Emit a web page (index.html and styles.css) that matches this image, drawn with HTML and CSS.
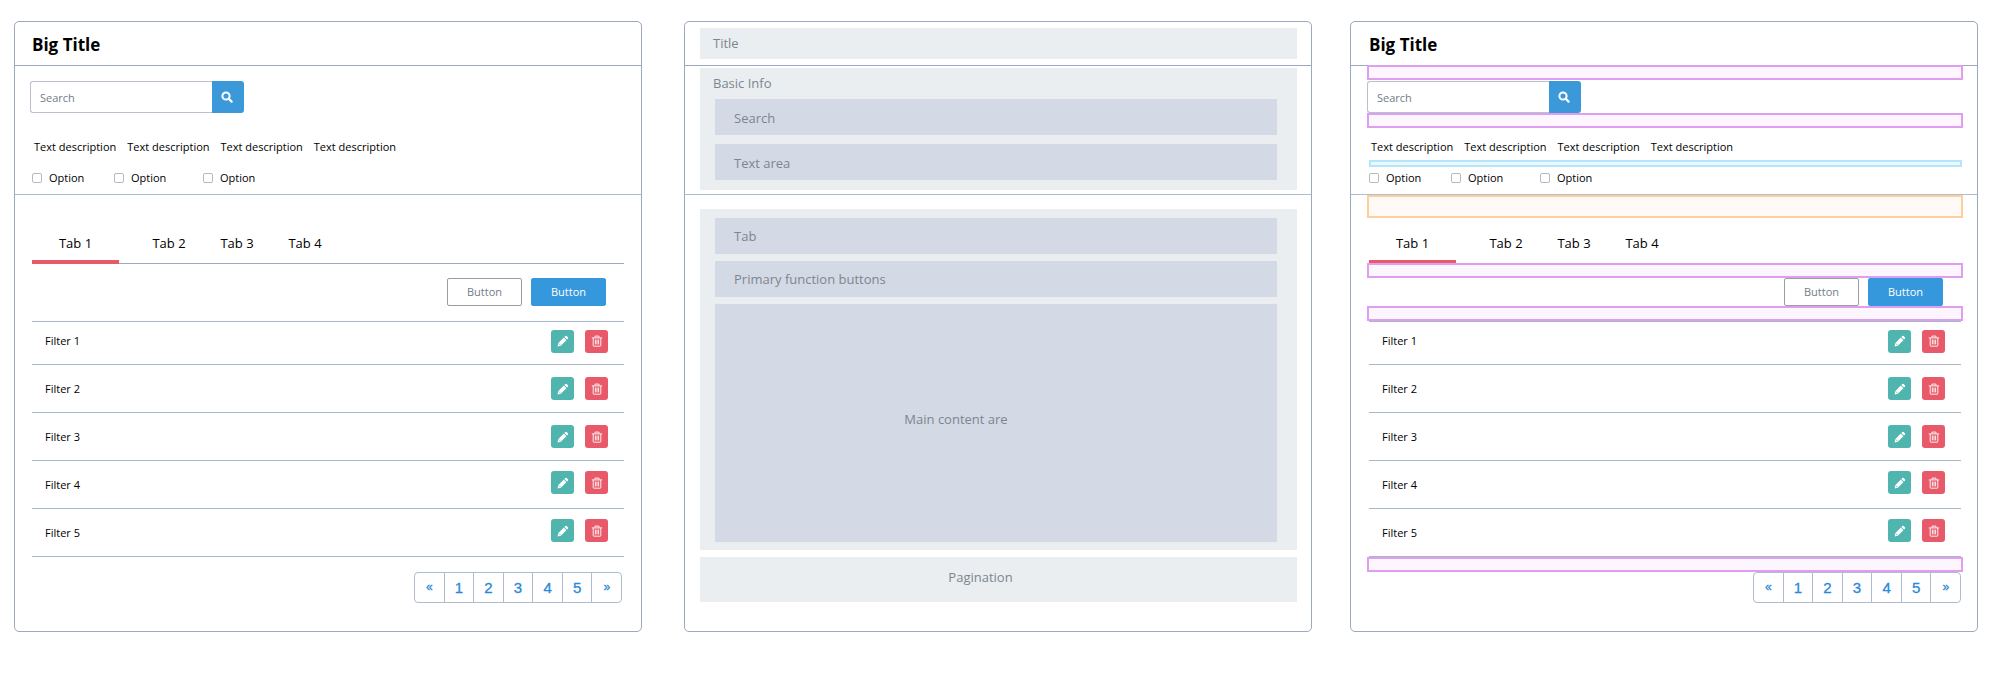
FILE: index.html
```html
<!DOCTYPE html>
<html lang="en">
<head>
<meta charset="utf-8">
<title>Page layout</title>
<link rel="stylesheet" href="styles.css">
</head>
<body>
<svg class="sprite" aria-hidden="true">
  <symbol id="i-search" viewBox="0 0 12 12"><circle cx="5" cy="5" r="3.6" fill="none" stroke="currentColor" stroke-width="2"/><path d="M7.8 7.8 10.6 10.6" stroke="currentColor" stroke-width="2.2" stroke-linecap="round"/></symbol>
  <symbol id="i-edit" viewBox="0 0 12 12"><path d="M8.3 1.1a1 1 0 0 1 1.4 0l1.2 1.2a1 1 0 0 1 0 1.4l-.9.9-2.6-2.6zM6.8 2.6l2.6 2.6-5.6 5.6-3.2.6.6-3.2z" fill="currentColor"/><path d="M2 8.6 3.4 10" stroke="#50b5ae" stroke-width=".8"/></symbol>
  <symbol id="i-trash" viewBox="0 0 12 12"><path d="M.8 2.9h10.4M4 2.6V1.1h4v1.5M2.2 3v7.6q0 .6.6.6h6.4q.6 0 .6-.6V3M4.4 4.6v4.8M6 4.6v4.8M7.6 4.6v4.8" fill="none" stroke="currentColor" stroke-width=".9"/></symbol>
</svg>
<main class="boards">
  <section class="panel">
    <header class="panel-head"><h2>Big Title</h2></header>
    <div class="info">
      <form class="search">
        <input type="text" placeholder="Search" aria-label="Search">
        <button type="button" aria-label="Run search"><svg><use href="#i-search"/></svg></button>
      </form>
      <ul class="descriptions"><li>Text description</li><li>Text description</li><li>Text description</li><li>Text description</li></ul>
      <div class="options">
        <label><input type="checkbox">Option</label>
        <label><input type="checkbox">Option</label>
        <label><input type="checkbox">Option</label>
      </div>
    </div>
    <div class="content">
      <div class="tabs" role="tablist">
        <button type="button" role="tab" aria-selected="true">Tab 1</button>
        <button type="button" role="tab" aria-selected="false">Tab 2</button>
        <button type="button" role="tab" aria-selected="false">Tab 3</button>
        <button type="button" role="tab" aria-selected="false">Tab 4</button>
      </div>
      <div class="actions">
        <button type="button" class="btn">Button</button>
        <button type="button" class="btn btn-primary">Button</button>
      </div>
      <table class="filters">
        <tr><td>Filter 1</td><td class="tools"><button type="button" class="edit" aria-label="Edit filter 1"><svg><use href="#i-edit"/></svg></button><button type="button" class="delete" aria-label="Delete filter 1"><svg><use href="#i-trash"/></svg></button></td></tr>
        <tr><td>Filter 2</td><td class="tools"><button type="button" class="edit" aria-label="Edit filter 2"><svg><use href="#i-edit"/></svg></button><button type="button" class="delete" aria-label="Delete filter 2"><svg><use href="#i-trash"/></svg></button></td></tr>
        <tr><td>Filter 3</td><td class="tools"><button type="button" class="edit" aria-label="Edit filter 3"><svg><use href="#i-edit"/></svg></button><button type="button" class="delete" aria-label="Delete filter 3"><svg><use href="#i-trash"/></svg></button></td></tr>
        <tr><td>Filter 4</td><td class="tools"><button type="button" class="edit" aria-label="Edit filter 4"><svg><use href="#i-edit"/></svg></button><button type="button" class="delete" aria-label="Delete filter 4"><svg><use href="#i-trash"/></svg></button></td></tr>
        <tr><td>Filter 5</td><td class="tools"><button type="button" class="edit" aria-label="Edit filter 5"><svg><use href="#i-edit"/></svg></button><button type="button" class="delete" aria-label="Delete filter 5"><svg><use href="#i-trash"/></svg></button></td></tr>
      </table>
      <nav class="pagination" aria-label="Pages"><a href="#prev" class="arrow">«</a><a href="#1">1</a><a href="#2">2</a><a href="#3">3</a><a href="#4">4</a><a href="#5">5</a><a href="#next" class="arrow">»</a></nav>
    </div>
  </section>

  <section class="panel wireframe">
    <header class="panel-head"><div class="zone zone-title">Title</div></header>
    <div class="wire-info">
      <div class="zone zone-info">
        <p>Basic Info</p>
        <div class="block">Search</div>
        <div class="block">Text area</div>
      </div>
    </div>
    <div class="wire-content">
      <div class="zone zone-main">
        <div class="block">Tab</div>
        <div class="block">Primary function buttons</div>
        <div class="block block-main">Main content are</div>
      </div>
      <div class="zone zone-pagination">Pagination</div>
    </div>
  </section>

  <section class="panel spaced">
    <header class="panel-head"><h2>Big Title</h2></header>
    <div class="info">
      <i class="band band-top"></i>
      <form class="search">
        <input type="text" placeholder="Search" aria-label="Search">
        <button type="button" aria-label="Run search"><svg><use href="#i-search"/></svg></button>
        <i class="band band-below"></i>
      </form>
      <ul class="descriptions"><li>Text description</li><li>Text description</li><li>Text description</li><li>Text description</li></ul>
      <div class="options">
        <i class="band band-small"></i>
        <label><input type="checkbox">Option</label>
        <label><input type="checkbox">Option</label>
        <label><input type="checkbox">Option</label>
      </div>
    </div>
    <div class="content">
      <i class="band band-large"></i>
      <div class="tabs" role="tablist">
        <button type="button" role="tab" aria-selected="true">Tab 1</button>
        <button type="button" role="tab" aria-selected="false">Tab 2</button>
        <button type="button" role="tab" aria-selected="false">Tab 3</button>
        <button type="button" role="tab" aria-selected="false">Tab 4</button>
      </div>
      <div class="actions">
        <i class="band band-above"></i>
        <button type="button" class="btn">Button</button>
        <button type="button" class="btn btn-primary">Button</button>
        <i class="band band-below"></i>
      </div>
      <table class="filters">
        <tr><td>Filter 1</td><td class="tools"><button type="button" class="edit" aria-label="Edit filter 1"><svg><use href="#i-edit"/></svg></button><button type="button" class="delete" aria-label="Delete filter 1"><svg><use href="#i-trash"/></svg></button></td></tr>
        <tr><td>Filter 2</td><td class="tools"><button type="button" class="edit" aria-label="Edit filter 2"><svg><use href="#i-edit"/></svg></button><button type="button" class="delete" aria-label="Delete filter 2"><svg><use href="#i-trash"/></svg></button></td></tr>
        <tr><td>Filter 3</td><td class="tools"><button type="button" class="edit" aria-label="Edit filter 3"><svg><use href="#i-edit"/></svg></button><button type="button" class="delete" aria-label="Delete filter 3"><svg><use href="#i-trash"/></svg></button></td></tr>
        <tr><td>Filter 4</td><td class="tools"><button type="button" class="edit" aria-label="Edit filter 4"><svg><use href="#i-edit"/></svg></button><button type="button" class="delete" aria-label="Delete filter 4"><svg><use href="#i-trash"/></svg></button></td></tr>
        <tr><td>Filter 5</td><td class="tools"><button type="button" class="edit" aria-label="Edit filter 5"><svg><use href="#i-edit"/></svg></button><button type="button" class="delete" aria-label="Delete filter 5"><svg><use href="#i-trash"/></svg></button></td></tr>
      </table>
      <div class="pager-row">
        <i class="band band-above"></i>
        <nav class="pagination" aria-label="Pages"><a href="#prev" class="arrow">«</a><a href="#1">1</a><a href="#2">2</a><a href="#3">3</a><a href="#4">4</a><a href="#5">5</a><a href="#next" class="arrow">»</a></nav>
      </div>
    </div>
  </section>
</main>
</body>
</html>
```

FILE: styles.css
```css
* { box-sizing: border-box; }

body {
  margin: 0;
  background: #fff;
  color: #000;
  font: 11px/18px "Open Sans", "Noto Sans", sans-serif;
}

.sprite { display: none; }

button, input { font: inherit; color: inherit; }
button { padding: 0; border: 0; background: none; cursor: pointer; }

.boards {
  display: flex;
  align-items: stretch;
  padding: 21px 21px 21px 14px;
}

.panel {
  flex: 1;
  min-width: 0;
  border: 1px solid #9ba8bf;
  border-radius: 5px;
}
.wireframe { margin: 0 38px 0 42px; }

.panel-head {
  height: 44px;
  border-bottom: 1px solid #9ba8bf;
}
.panel-head h2 {
  margin: 0;
  padding: 11px 17px 8px;
  font-size: 17px;
  line-height: 24px;
}

/* Search, descriptions and options */
.info {
  position: relative;
  padding: 15px 15px 7px;
  border-bottom: 1px solid #afbdd0;
}
.search { position: relative; display: flex; }
.search input {
  width: 182px;
  height: 32px;
  padding: 0 9px;
  border: 1px solid #b9c1cc;
  border-right: 0;
  border-radius: 3px 0 0 3px;
  background: #fff;
}
.search input::placeholder { color: #737d89; opacity: 1; }
.search button {
  display: grid;
  place-items: center;
  width: 32px;
  height: 32px;
  padding-right: 2px;
  border-radius: 0 3px 3px 0;
  background: #3c99d9;
  color: #fff;
}
.search svg, .tools svg { width: 12px; height: 12px; display: block; }

.descriptions {
  display: flex;
  gap: 11px;
  margin: 25px 0 0;
  padding: 0 4px;
  list-style: none;
}
.options {
  position: relative;
  display: grid;
  grid-template-columns: 82px 89px auto;
  margin-top: 13px;
  padding: 0 2px;
}
.options label { display: flex; align-items: center; gap: 7px; }
.options input {
  appearance: none;
  width: 10px;
  height: 10px;
  margin: 0;
  border: 1px solid #b4bac4;
  border-radius: 2px;
  background: #fff;
}

/* Tabs, buttons, filters and pages */
.content { position: relative; padding: 31px 17px 28px; }
.tabs {
  display: flex;
  box-shadow: inset 0 -1px #9ba8bf;
}
.tabs button {
  width: 68px;
  height: 38px;
  border-bottom: 4px solid transparent;
  font-size: 13px;
}
.tabs button[aria-selected="true"] {
  width: 87px;
  margin-right: 16px;
  border-bottom-color: #e85a68;
}
.actions {
  position: relative;
  display: flex;
  justify-content: flex-end;
  gap: 9px;
  margin: 14px 0 15px;
  padding-right: 18px;
}
.btn {
  width: 75px;
  height: 28px;
  border: 1px solid #999ea5;
  border-radius: 2px;
  background: #fff;
  color: #737d89;
}
.btn-primary { border-color: #3597dc; background: #3597dc; color: #fff; }

.filters {
  width: 100%;
  border-collapse: collapse;
  border-top: 1px solid #aab6c8;
}
.filters tr { height: 48px; border-bottom: 1px solid #aab6c8; }
.filters tr:first-child { height: 43px; }
.filters td { padding: 0 13px; }
.filters .tools { padding: 0 16px 0 0; text-align: right; font-size: 0; }
.filters tr:first-child td { padding-bottom: 4px; }
.filters tr:nth-child(n+4) .tools { padding-bottom: 4px; }
.tools button {
  display: inline-grid;
  place-items: center;
  width: 23px;
  height: 23px;
  margin-left: 11px;
  border-radius: 3px;
  color: #fff;
  vertical-align: middle;
}
.edit { background: #50b5ae; }
.delete { background: #e85a69; }

.pagination {
  display: flex;
  width: 208px;
  margin: 15px 2px 0 auto;
  border: 1px solid #b0bccd;
  border-radius: 4px;
}
.pagination a {
  flex: 1;
  height: 29px;
  border-left: 1px solid #b0bccd;
  color: #2b88d8;
  font: 15px/29px "Liberation Sans", Arial, sans-serif;
  -webkit-text-stroke: 0.3px;
  text-align: center;
  text-decoration: none;
}
.pagination a:first-child { border-left: 0; }
.pagination .arrow { font-size: 12px; }

/* Wireframe */
.wireframe { color: #7d868e; font-size: 13px; }
.zone { background: #eaeef1; }
.wireframe .panel-head { padding: 6px 14px 6px 15px; }
.zone-title { height: 31px; padding: 0 13px; line-height: 31px; }
.wire-info { padding: 2px 14px 4px 15px; border-bottom: 1px solid #afbdd0; }
.zone-info { height: 122px; padding: 6px 20px 10px 15px; }
.zone-info p { margin: 0 0 7px -2px; }
.block {
  height: 36px;
  padding: 0 19px;
  background: #d3dae6;
  line-height: 38px;
}
.block + .block { margin-top: 9px; }
.wire-content { padding: 14px 14px 28px 15px; }
.zone-main { padding: 9px 20px 8px 15px; }
.zone-main .block { line-height: 36px; }
.zone-main .block + .block { margin-top: 7px; }
.zone-main .block-main {
  display: grid;
  place-items: center;
  height: 238px;
  padding: 0 99px 8px 19px;
  line-height: 18px;
}
.zone-pagination {
  height: 45px;
  margin-top: 7px;
  padding-right: 36px;
  line-height: 41px;
  text-align: center;
}

/* Spacing bands laid over the panel */
.spaced h2 { padding-left: 18px; }
.spaced .info { padding-left: 16px; }
.spaced .content { padding-left: 18px; padding-right: 16px; }
.spaced .pager-row { position: relative; margin-top: 15px; }
.spaced .pagination { margin: 0 0 0 auto; }
.band {
  position: absolute;
  z-index: 1;
  left: 0;
  right: -2px;
  height: 15px;
  border: 2px solid #df9ff0;
  background: #fdf6ff;
}
.info > .band, .content > .band { left: 16px; right: 14px; }
.info .band-below { right: -1px; }
.content .band-above, .content .band-below { left: -2px; }
.band-top { top: -1px; }
.band-below { top: 100%; }
.band-above { bottom: 100%; }
.band-small {
  left: 2px;
  right: 0;
  bottom: 100%;
  height: 7px;
  margin-bottom: 2px;
  border-color: #b5e5fa;
  background: #ebf8fe;
}
.band-large {
  top: 0;
  height: 23px;
  border-color: #fdcf9f;
  background: #fffaf6;
}
```
